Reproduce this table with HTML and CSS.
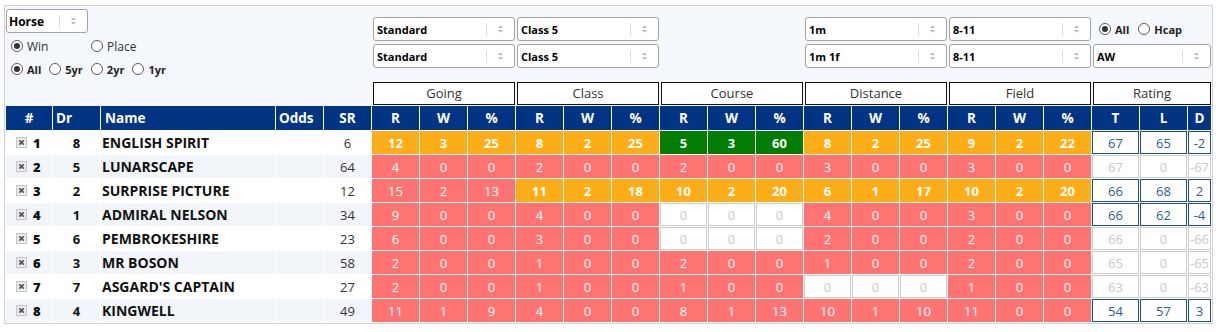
FILE: index.html
```html
<!DOCTYPE html>
<html>
<head>
<meta charset="utf-8">
<link rel="stylesheet" href="styles.css">
</head>
<body>
<div class="panel">
  <div class="top">
    <div class="filter-left">
      <div class="sel sel-horse"><span class="val">Horse</span><span class="sep"></span><span class="arr"><svg width="7" height="10" viewBox="0 0 7 10"><path d="M3.5 1.5L6 4H1Z M3.5 8.5L6 6H1Z" fill="#b4b4b4"/></svg></span></div>
      <div class="radio-row big">
        <label class="opt w80"><span class="rb on"></span>Win</label>
        <label class="opt"><span class="rb"></span>Place</label>
      </div>
      <div class="radio-row small">
        <label class="opt"><span class="rb on"></span>All</label>
        <label class="opt"><span class="rb"></span>5yr</label>
        <label class="opt"><span class="rb"></span>2yr</label>
        <label class="opt"><span class="rb"></span>1yr</label>
      </div>
    </div>
    <div class="filter-right">
      <div class="sel"><span class="val">Standard</span><span class="sep"></span><span class="arr"><svg width="7" height="10" viewBox="0 0 7 10"><path d="M3.5 1.5L6 4H1Z M3.5 8.5L6 6H1Z" fill="#b4b4b4"/></svg></span></div>
      <div class="sel"><span class="val">Class 5</span><span class="sep"></span><span class="arr"><svg width="7" height="10" viewBox="0 0 7 10"><path d="M3.5 1.5L6 4H1Z M3.5 8.5L6 6H1Z" fill="#b4b4b4"/></svg></span></div>
      <div class="blank"></div>
      <div class="sel"><span class="val">1m</span><span class="sep"></span><span class="arr"><svg width="7" height="10" viewBox="0 0 7 10"><path d="M3.5 1.5L6 4H1Z M3.5 8.5L6 6H1Z" fill="#b4b4b4"/></svg></span></div>
      <div class="sel"><span class="val">8-11</span><span class="sep"></span><span class="arr"><svg width="7" height="10" viewBox="0 0 7 10"><path d="M3.5 1.5L6 4H1Z M3.5 8.5L6 6H1Z" fill="#b4b4b4"/></svg></span></div>
      <div class="rate-opts">
        <label class="opt"><span class="rb on"></span>All</label>
        <label class="opt"><span class="rb"></span>Hcap</label>
      </div>

      <div class="sel"><span class="val">Standard</span><span class="sep"></span><span class="arr"><svg width="7" height="10" viewBox="0 0 7 10"><path d="M3.5 1.5L6 4H1Z M3.5 8.5L6 6H1Z" fill="#b4b4b4"/></svg></span></div>
      <div class="sel"><span class="val">Class 5</span><span class="sep"></span><span class="arr"><svg width="7" height="10" viewBox="0 0 7 10"><path d="M3.5 1.5L6 4H1Z M3.5 8.5L6 6H1Z" fill="#b4b4b4"/></svg></span></div>
      <div class="blank"></div>
      <div class="sel"><span class="val">1m 1f</span><span class="sep"></span><span class="arr"><svg width="7" height="10" viewBox="0 0 7 10"><path d="M3.5 1.5L6 4H1Z M3.5 8.5L6 6H1Z" fill="#b4b4b4"/></svg></span></div>
      <div class="sel"><span class="val">8-11</span><span class="sep"></span><span class="arr"><svg width="7" height="10" viewBox="0 0 7 10"><path d="M3.5 1.5L6 4H1Z M3.5 8.5L6 6H1Z" fill="#b4b4b4"/></svg></span></div>
      <div class="sel"><span class="val">AW</span><span class="sep"></span><span class="arr"><svg width="7" height="10" viewBox="0 0 7 10"><path d="M3.5 1.5L6 4H1Z M3.5 8.5L6 6H1Z" fill="#b4b4b4"/></svg></span></div>

      <div class="grp">Going</div>
      <div class="grp">Class</div>
      <div class="grp">Course</div>
      <div class="grp">Distance</div>
      <div class="grp">Field</div>
      <div class="grp">Rating</div>
    </div>
  </div>

  <table class="grid">
    <colgroup>
      <col class="c-idx"><col class="c-dr"><col class="c-name"><col class="c-odds"><col class="c-sr">
      <col class="c-s"><col class="c-s"><col class="c-s">
      <col class="c-s"><col class="c-s"><col class="c-s">
      <col class="c-s"><col class="c-s"><col class="c-s">
      <col class="c-s"><col class="c-s"><col class="c-s">
      <col class="c-s"><col class="c-s"><col class="c-s">
      <col class="c-s"><col class="c-s"><col class="c-d">
    </colgroup>
    <thead>
      <tr>
        <th>#</th><th class="hl">Dr</th><th class="hl hname">Name</th><th class="hl">Odds</th><th>SR</th>
        <th>R</th><th>W</th><th>%</th>
        <th>R</th><th>W</th><th>%</th>
        <th>R</th><th>W</th><th>%</th>
        <th>R</th><th>W</th><th>%</th>
        <th>R</th><th>W</th><th>%</th>
        <th>T</th><th>L</th><th>D</th>
      </tr>
    </thead>
    <tbody>
      <tr>
        <td><div class="idx"><svg class="xb" width="11" height="11" viewBox="0 0 11 11"><rect x="0.5" y="0.5" width="10" height="10" fill="#ebebeb" stroke="#c6c6c6"/><path d="M3.3 3.3L7.7 7.7M7.7 3.3L3.3 7.7" stroke="#555" stroke-width="1.7"/></svg><b>1</b></div></td>
        <td class="dr">8</td><td class="name">ENGLISH SPIRIT</td><td></td><td class="sr">6</td>
        <td class="o">12</td><td class="o">3</td><td class="o">25</td>
        <td class="o">8</td><td class="o">2</td><td class="o">25</td>
        <td class="g">5</td><td class="g">3</td><td class="g">60</td>
        <td class="o">8</td><td class="o">2</td><td class="o">25</td>
        <td class="o">9</td><td class="o">2</td><td class="o">22</td>
        <td class="rt">67</td><td class="rt">65</td><td class="rt">-2</td>
      </tr>
      <tr>
        <td><div class="idx"><svg class="xb" width="11" height="11" viewBox="0 0 11 11"><rect x="0.5" y="0.5" width="10" height="10" fill="#ebebeb" stroke="#c6c6c6"/><path d="M3.3 3.3L7.7 7.7M7.7 3.3L3.3 7.7" stroke="#555" stroke-width="1.7"/></svg><b>2</b></div></td>
        <td class="dr">5</td><td class="name">LUNARSCAPE</td><td></td><td class="sr">64</td>
        <td class="r">4</td><td class="r">0</td><td class="r">0</td>
        <td class="r">2</td><td class="r">0</td><td class="r">0</td>
        <td class="r">2</td><td class="r">0</td><td class="r">0</td>
        <td class="r">3</td><td class="r">0</td><td class="r">0</td>
        <td class="r">3</td><td class="r">0</td><td class="r">0</td>
        <td class="z">67</td><td class="z">0</td><td class="z">-67</td>
      </tr>
      <tr>
        <td><div class="idx"><svg class="xb" width="11" height="11" viewBox="0 0 11 11"><rect x="0.5" y="0.5" width="10" height="10" fill="#ebebeb" stroke="#c6c6c6"/><path d="M3.3 3.3L7.7 7.7M7.7 3.3L3.3 7.7" stroke="#555" stroke-width="1.7"/></svg><b>3</b></div></td>
        <td class="dr">2</td><td class="name">SURPRISE PICTURE</td><td></td><td class="sr">12</td>
        <td class="r">15</td><td class="r">2</td><td class="r">13</td>
        <td class="o">11</td><td class="o">2</td><td class="o">18</td>
        <td class="o">10</td><td class="o">2</td><td class="o">20</td>
        <td class="o">6</td><td class="o">1</td><td class="o">17</td>
        <td class="o">10</td><td class="o">2</td><td class="o">20</td>
        <td class="rt">66</td><td class="rt">68</td><td class="rt">2</td>
      </tr>
      <tr>
        <td><div class="idx"><svg class="xb" width="11" height="11" viewBox="0 0 11 11"><rect x="0.5" y="0.5" width="10" height="10" fill="#ebebeb" stroke="#c6c6c6"/><path d="M3.3 3.3L7.7 7.7M7.7 3.3L3.3 7.7" stroke="#555" stroke-width="1.7"/></svg><b>4</b></div></td>
        <td class="dr">1</td><td class="name">ADMIRAL NELSON</td><td></td><td class="sr">34</td>
        <td class="r">9</td><td class="r">0</td><td class="r">0</td>
        <td class="r">4</td><td class="r">0</td><td class="r">0</td>
        <td class="z">0</td><td class="z">0</td><td class="z">0</td>
        <td class="r">4</td><td class="r">0</td><td class="r">0</td>
        <td class="r">3</td><td class="r">0</td><td class="r">0</td>
        <td class="rt">66</td><td class="rt">62</td><td class="rt">-4</td>
      </tr>
      <tr>
        <td><div class="idx"><svg class="xb" width="11" height="11" viewBox="0 0 11 11"><rect x="0.5" y="0.5" width="10" height="10" fill="#ebebeb" stroke="#c6c6c6"/><path d="M3.3 3.3L7.7 7.7M7.7 3.3L3.3 7.7" stroke="#555" stroke-width="1.7"/></svg><b>5</b></div></td>
        <td class="dr">6</td><td class="name">PEMBROKESHIRE</td><td></td><td class="sr">23</td>
        <td class="r">6</td><td class="r">0</td><td class="r">0</td>
        <td class="r">3</td><td class="r">0</td><td class="r">0</td>
        <td class="z">0</td><td class="z">0</td><td class="z">0</td>
        <td class="r">2</td><td class="r">0</td><td class="r">0</td>
        <td class="r">2</td><td class="r">0</td><td class="r">0</td>
        <td class="z">66</td><td class="z">0</td><td class="z">-66</td>
      </tr>
      <tr>
        <td><div class="idx"><svg class="xb" width="11" height="11" viewBox="0 0 11 11"><rect x="0.5" y="0.5" width="10" height="10" fill="#ebebeb" stroke="#c6c6c6"/><path d="M3.3 3.3L7.7 7.7M7.7 3.3L3.3 7.7" stroke="#555" stroke-width="1.7"/></svg><b>6</b></div></td>
        <td class="dr">3</td><td class="name">MR BOSON</td><td></td><td class="sr">58</td>
        <td class="r">2</td><td class="r">0</td><td class="r">0</td>
        <td class="r">1</td><td class="r">0</td><td class="r">0</td>
        <td class="r">2</td><td class="r">0</td><td class="r">0</td>
        <td class="r">1</td><td class="r">0</td><td class="r">0</td>
        <td class="r">2</td><td class="r">0</td><td class="r">0</td>
        <td class="z">65</td><td class="z">0</td><td class="z">-65</td>
      </tr>
      <tr>
        <td><div class="idx"><svg class="xb" width="11" height="11" viewBox="0 0 11 11"><rect x="0.5" y="0.5" width="10" height="10" fill="#ebebeb" stroke="#c6c6c6"/><path d="M3.3 3.3L7.7 7.7M7.7 3.3L3.3 7.7" stroke="#555" stroke-width="1.7"/></svg><b>7</b></div></td>
        <td class="dr">7</td><td class="name">ASGARD'S CAPTAIN</td><td></td><td class="sr">27</td>
        <td class="r">2</td><td class="r">0</td><td class="r">0</td>
        <td class="r">1</td><td class="r">0</td><td class="r">0</td>
        <td class="r">1</td><td class="r">0</td><td class="r">0</td>
        <td class="z">0</td><td class="z">0</td><td class="z">0</td>
        <td class="r">1</td><td class="r">0</td><td class="r">0</td>
        <td class="z">63</td><td class="z">0</td><td class="z">-63</td>
      </tr>
      <tr>
        <td><div class="idx"><svg class="xb" width="11" height="11" viewBox="0 0 11 11"><rect x="0.5" y="0.5" width="10" height="10" fill="#ebebeb" stroke="#c6c6c6"/><path d="M3.3 3.3L7.7 7.7M7.7 3.3L3.3 7.7" stroke="#555" stroke-width="1.7"/></svg><b>8</b></div></td>
        <td class="dr">4</td><td class="name">KINGWELL</td><td></td><td class="sr">49</td>
        <td class="r">11</td><td class="r">1</td><td class="r">9</td>
        <td class="r">4</td><td class="r">0</td><td class="r">0</td>
        <td class="r">8</td><td class="r">1</td><td class="r">13</td>
        <td class="r">10</td><td class="r">1</td><td class="r">10</td>
        <td class="r">11</td><td class="r">0</td><td class="r">0</td>
        <td class="rt">54</td><td class="rt">57</td><td class="rt">3</td>
      </tr>
    </tbody>
  </table>
</div>
</body>
</html>
```

FILE: styles.css
```css
body {
  margin: 0;
  background: #fff;
  font-family: "Open Sans", "Noto Sans", sans-serif;
  color: #222;
}

.panel {
  margin: 5px 0 0 4px;
  width: 1209px;
  box-sizing: border-box;
  border: 1px solid #d2d2d2;
  background: #f4f7fb;
}

.top {
  display: flex;
  margin-left: 1px;
}

.filter-left {
  width: 366px;
  padding-top: 3px;
  display: flex;
  flex-direction: column;
}

.sel {
  height: 24px;
  box-sizing: border-box;
  border: 1px solid #a3a3a3;
  border-radius: 3px;
  background: #fff;
  display: flex;
  align-items: center;
  font-size: 11px;
  font-weight: 700;
  color: #000;
}

.sel .val {
  flex: 1;
  padding-left: 3px;
  white-space: nowrap;
}

.sel-horse .val {
  font-size: 12px;
  padding-left: 2px;
}

.sel .sep {
  width: 1px;
  height: 13px;
  background: #dcdcdc;
}

.sel .arr {
  width: 27px;
  display: flex;
  justify-content: center;
  align-items: center;
}

.sel-horse {
  width: 82px;
}

.radio-row {
  display: flex;
  align-items: center;
  height: 20px;
  margin-top: 3px;
  padding-left: 5px;
}

.radio-row.big {
  font-size: 12px;
  color: #333;
}

.radio-row.small {
  font-size: 11px;
  font-weight: 700;
  color: #222;
  gap: 8px;
}

.opt {
  display: flex;
  align-items: center;
  gap: 4px;
}

.opt.w80 {
  width: 80px;
}

.rb {
  width: 12px;
  height: 12px;
  box-sizing: border-box;
  border: 1px solid #5a5a5a;
  border-radius: 50%;
  background: #fff;
  display: flex;
  align-items: center;
  justify-content: center;
}

.rb.on::after {
  content: "";
  width: 6px;
  height: 6px;
  border-radius: 50%;
  background: #333;
}

.filter-right {
  display: grid;
  grid-template-columns: repeat(17, 48px) 24px;
  grid-template-rows: 24px 24px 34px;
  row-gap: 3px;
  padding: 11px 0 1px;
}

.filter-right .sel,
.filter-right .blank,
.rate-opts,
.grp {
  grid-column: span 3;
  margin: 0 1px;
}

.rate-opts {
  display: flex;
  align-items: center;
  gap: 9px;
  padding-left: 6px;
  font-size: 11px;
  font-weight: 700;
  color: #222;
}

.grp {
  grid-row: 3;
  align-self: end;
  height: 23px;
  box-sizing: border-box;
  border: 1px solid #111;
  background: #fff;
  font-size: 13px;
  color: #333;
  text-align: center;
  line-height: 21px;
}

.grid {
  border-collapse: separate;
  border-spacing: 0;
  table-layout: fixed;
  width: 1206px;
  margin-left: 1px;
  font-size: 13px;
}

.c-idx { width: 47px; }
.c-dr { width: 48px; }
.c-name { width: 175px; }
.c-odds { width: 48px; }
.c-sr { width: 48px; }
.c-s { width: 48px; }
.c-d { width: 24px; }

.grid th,
.grid td {
  padding: 0;
  border-right: 1px solid #fff;
  border-bottom: 1px solid #fff;
  text-align: center;
  white-space: nowrap;
}

.grid thead tr {
  height: 25px;
}

.grid tbody tr {
  height: 24px;
}

.grid th {
  background: #013584;
  color: #fff;
  font-weight: 700;
  font-size: 13.5px;
}

.grid th.hl {
  text-align: left;
  padding-left: 3px;
}

.grid th.hname {
  padding-left: 4px;
}

.grid tbody tr:nth-child(odd) td {
  background: #fff;
}

.grid tbody tr:nth-child(even) td {
  background: #f2f5fa;
}

.idx {
  display: flex;
  align-items: center;
  gap: 6px;
  padding-left: 10px;
  font-weight: 700;
  color: #111;
}

.xb {
  display: block;
}

.grid td.dr {
  font-weight: 700;
  color: #111;
}

.grid td.name {
  text-align: left;
  padding-left: 1px;
  font-weight: 700;
  font-size: 14px;
  color: #111;
}

.grid td.sr {
  color: #333;
}

.grid tbody tr td.o {
  background: #fdad18;
  color: #fff;
  font-weight: 700;
}

.grid tbody tr td.r {
  background: #ff7373;
  color: #fff;
}

.grid tbody tr td.g {
  background: #017d01;
  color: #fff;
  font-weight: 700;
}

.grid tbody tr td.z {
  background: #fff;
  color: #c9c9c9;
  box-shadow: inset 0 0 0 1px #cdcdcd;
}

.grid tbody tr td.rt {
  background: #fff;
  color: #2b5c9b;
  box-shadow: inset 0 0 0 1px #1d4f8e;
}
```
